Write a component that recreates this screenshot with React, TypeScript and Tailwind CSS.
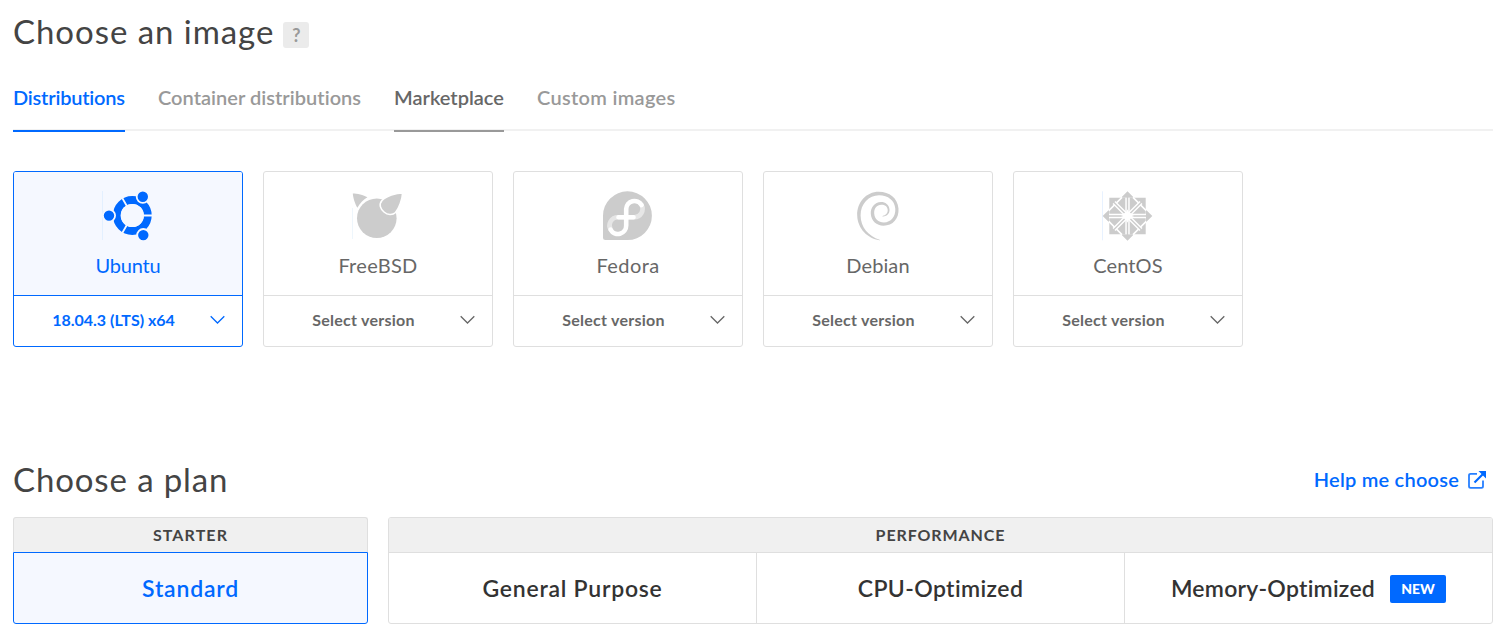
import type { ReactNode } from "react";

function UbuntuLogo() {
  return (
    <svg width="52" height="50" viewBox="-1 0 52 50" fill="none">
      <path d="M-0.5 0V49" stroke="#e3f0ff" />
      <circle cx="29.3" cy="24.5" r="15.5" stroke="#0069ff" strokeWidth="7.8" />
      <path d="M29.3 24.5H51M29.3 24.5L18.3 5.4M29.3 24.5L18.3 43.6" stroke="#f5f8ff" strokeWidth="1.9" />
      <circle cx="29.3" cy="24.5" r="11.5" fill="#f5f8ff" />
      <g fill="#0069ff" stroke="#f5f8ff" strokeWidth="1.8">
        <circle cx="6" cy="24.6" r="6.1" />
        <circle cx="39.8" cy="5.8" r="6.1" />
        <circle cx="40.3" cy="44.1" r="6.1" />
      </g>
    </svg>
  );
}

function FreeBsdLogo() {
  return (
    <svg width="52" height="50" viewBox="-1 0 52 50" fill="#ccc">
      <path d="M-0.5 17V48" stroke="#eef6fc" />
      <circle cx="23.8" cy="27.2" r="19.8" />
      <path d="M-0.2 2.4C4 2.6 10.5 3.6 14.4 6.2C10.5 8.4 6.5 12.5 4.4 16.8C2 13 0 6 -0.2 2.4Z" />
      <path d="M49.6 2C43 2 33 5 29 9.5C25.500 13.5 27.500 18 31 21C34.500 24 39.500 24.500 42.500 21.500C46 17.500 49.400 8 49.600 2Z" stroke="#fff" strokeWidth="1.6" />
    </svg>
  );
}

function FedoraLogo() {
  return (
    <svg width="52" height="50" viewBox="-1 0 52 50" fill="none">
      <path d="M24.500 0.300A24.400 24.400 0 0 1 24.500 49.100H2.500Q0 49.100 0 46.600V24.700A24.400 24.400 0 0 1 24.500 0.300Z" fill="#ccc" />
      <g strokeWidth="4.6">
        <path d="M23.200 26.200H31.200A8.300 8.300 0 0 0 38.600 14M23.200 26.200H14.800A8.300 8.300 0 0 0 7.600 38.600" stroke="#e6e6e6" />
        <path d="M38.600 14A8.300 8.300 0 0 0 23.200 17.900V34.500A8.300 8.300 0 0 1 7.600 38.600M15.500 26.200H30.500" stroke="#fff" strokeLinecap="round" />
      </g>
    </svg>
  );
}

function DebianLogo() {
  return (
    <svg width="52" height="50" viewBox="-4 0 52 50" fill="#ccc">
      <path d="M26.500 25.500C31 25.800 33.800 22.500 33.500 18.600C33.200 13.500 29 11 25 11.100C18.500 11.300 14.300 17 14.800 23C15.400 30 20.500 34.600 27.500 34.700C37 34.700 43.200 27.500 42.500 17.500C41.500 7 33.500 0.800 22.800 0.800C10 0.800 0.800 11.500 1.200 24.500C1.600 37.500 11.500 47.500 23.500 49.300C24.200 49.400 24.200 49 23.600 48.800C12.500 45 4.700 36.500 4.600 24.500C4.500 12.500 13 4.100 23.200 4.200C32 4.300 38.700 9.300 39.300 17.700C39.800 25.500 34.800 31.300 28 31.400C22.500 31.500 18.600 28 18.200 22.500C17.900 17.500 20.800 13.900 25.200 13.700C28.800 13.600 31.500 15.500 31.700 18.800C31.900 22 30 24.500 26.500 24.900Z" />
    </svg>
  );
}

function CentOsLogo() {
  return (
    <svg width="52" height="50" viewBox="-1 -0.300 52 50" fill="none">
      <path d="M-0.500 0V49" stroke="#e8f2ff" />
      <path d="M6.300 6.500H42.700V42.900H6.300Z" fill="#ccc" />
      <path d="M24.500 0L31 6.500H18ZM49.300 24.700L43 31V18.400ZM24.500 49.400L18 42.900H31ZM-0.300 24.700L6 18.400V31Z" fill="#ccc" />
      <path d="M5.800 19.300L19 6.100M30 6.100L43.200 19.300M43.200 30.100L30 43.300M19 43.300L5.800 30.100" stroke="#fff" strokeWidth="1.5" />
      <path d="M11 11.200L38 38.200M38 11.200L11 38.200" stroke="#fff" strokeWidth="4.200" />
      <path d="M9.500 9.700L39.500 39.700M39.500 9.700L9.500 39.700" stroke="#ccc" strokeWidth="1.3" />
      <path d="M24.500 6.500V43M6 24.700H43" stroke="#fff" strokeWidth="4.400" />
      <path d="M24.500 5V44.500M5 24.700H44.500" stroke="#ccc" strokeWidth="1.500" />
      <path d="M24.500 18L26.500 22.700L31.200 24.700L26.500 26.700L24.500 31.400L22.500 26.700L17.800 24.700L22.500 22.700Z" fill="#fff" />
      <circle cx="24.500" cy="24.700" r="4.200" fill="#fff" />
    </svg>
  );
}

function Chevron() {
  return (
    <svg className="mb-0.5" width="15" height="10" viewBox="0 0 15 10" fill="none" stroke="currentColor" strokeWidth="1.3">
      <path d="M0.700 1.200L7.500 8L14.300 1.200" />
    </svg>
  );
}

function ExternalLink() {
  return (
    <svg className="mt-0.5" width="18" height="18" viewBox="0 0 18 18" fill="none" stroke="#0069ff">
      <path d="M9 2.800H2.600Q1 2.800 1 4.400V15.200Q1 16.800 2.600 16.800H13.400Q15 16.800 15 15.200V9.500" strokeWidth="1.800" opacity="0.850" />
      <path d="M6.500 11.500L15 3" strokeWidth="2.200" />
      <path d="M10.500 0H18V7.500Z" fill="#0069ff" stroke="none" />
    </svg>
  );
}

type Distro = { name: string; tracking: string; logo: ReactNode; version?: string };

const distros: Distro[] = [
  { name: "Ubuntu", tracking: "tracking-[-0.2px]", logo: <UbuntuLogo />, version: "18.04.3 (LTS) x64" },
  { name: "FreeBSD", tracking: "tracking-[0.3px]", logo: <FreeBsdLogo /> },
  { name: "Fedora", tracking: "tracking-[0.4px]", logo: <FedoraLogo /> },
  { name: "Debian", tracking: "tracking-[0.1px]", logo: <DebianLogo /> },
  { name: "CentOS", tracking: "tracking-[0.1px]", logo: <CentOsLogo /> },
];

function DistroCard({ name, tracking, logo, version }: Distro) {
  const active = Boolean(version);
  return (
    <div
      className={`flex h-44 w-[230px] flex-col overflow-hidden rounded-[3px] border ${
        active ? "border-[#0069ff] text-[#0069ff]" : "border-[#dfdfdf] text-[#676767]"
      }`}
    >
      <div
        className={`flex h-[124px] flex-col items-center border-b pt-[19px] ${
          active ? "border-[#0069ff] bg-[#f5f8ff]" : "border-[#dfdfdf]"
        }`}
      >
        {logo}
        <span className={`mt-2.5 text-xl leading-7 ${tracking}`}>{name}</span>
      </div>
      <div className="flex flex-1 items-center pr-[17px]">
        <span className={`flex-1 pr-[3px] pb-[3px] pl-1.5 text-center text-base font-bold ${active ? "" : "tracking-[0.25px]"}`}>
          {version ?? "Select version"}
        </span>
        <Chevron />
      </div>
    </div>
  );
}

const tabs = [
  { label: "Distributions", style: "w-28 tracking-[-0.2px] text-[#0069ff] border-[#0069ff]" },
  { label: "Container distributions", style: "w-[203px] tracking-[0.03px] text-[#999] border-transparent" },
  { label: "Marketplace", style: "w-[110px] tracking-[0px] text-[#676767] border-[#999]" },
  { label: "Custom images", style: "w-[139px] tracking-[0.3px] text-[#999] border-transparent" },
];

export default function App() {
  return (
    <main className="h-[630px] w-[1505px] overflow-hidden bg-white pr-3 pl-[13px] font-[Lato,sans-serif] text-[#444] [font-variant-ligatures:none]">
      <header className="flex items-center pt-[9px]">
        <h1 className="text-[33px] leading-[44px] tracking-[0.95px]">Choose an image</h1>
        <span className="mt-2 ml-[9px] flex size-[26px] items-center justify-center rounded-[3px] bg-[#ebebeb] text-lg font-bold text-[#999]">
          ?
        </span>
      </header>

      <nav className="mt-[30px] flex h-12 gap-[33px] border-b-2 border-[#f1f1f1]">
        {tabs.map((t) => (
          <a key={t.label} className={`h-[49px] shrink-0 border-b-2 text-xl leading-7 font-semibold whitespace-nowrap ${t.style}`}>
            {t.label}
          </a>
        ))}
      </nav>

      <section className="mt-10 flex gap-5">
        {distros.map((d) => (
          <DistroCard key={d.name} {...d} />
        ))}
      </section>

      <div className="mt-[110px] flex h-[44px] items-center justify-between">
        <h2 className="text-[33px] leading-[44px] tracking-[0.87px]">Choose a plan</h2>
        <a className="flex items-center gap-[9px] pr-[7px] text-xl font-semibold tracking-[0.23px] text-[#0069ff]">
          Help me choose
          <ExternalLink />
        </a>
      </div>

      <section className="mt-4 flex gap-5">
        <div className="w-[355px]">
          <div className="flex h-[35px] items-center justify-center rounded-t-[3px] border border-b-0 border-[#dfdfdf] bg-[#f0f0f0] text-base font-bold tracking-[1.1px]">
            STARTER
          </div>
          <div className="flex h-[72px] items-center justify-center rounded-b-[3px] border border-[#0069ff] bg-[#f5f8ff] text-[23px] font-semibold tracking-[0.8px] text-[#0069ff]">
            Standard
          </div>
        </div>
        <div className="w-[1105px] overflow-hidden rounded-[3px] border border-[#dfdfdf]">
          <div className="flex h-[35px] items-center justify-center border-b border-[#dfdfdf] bg-[#f0f0f0] text-base font-bold tracking-[0.9px]">
            PERFORMANCE
          </div>
          <div className="flex h-[70px] text-[23px] font-semibold text-[#333]">
            <div className="flex w-[368px] items-center justify-center border-r border-[#dfdfdf] tracking-[0.75px]">General Purpose</div>
            <div className="flex w-[368px] items-center justify-center border-r border-[#dfdfdf] tracking-[0.4px]">CPU-Optimized</div>
            <div className="flex flex-1 items-center justify-center gap-[15px] tracking-[0.25px]">
              Memory-Optimized
              <span className="mt-0.5 flex h-7 w-14 items-center justify-center rounded-[2px] bg-[#0069ff] text-sm font-black tracking-normal text-white">
                NEW
              </span>
            </div>
          </div>
        </div>
      </section>
    </main>
  );
}
